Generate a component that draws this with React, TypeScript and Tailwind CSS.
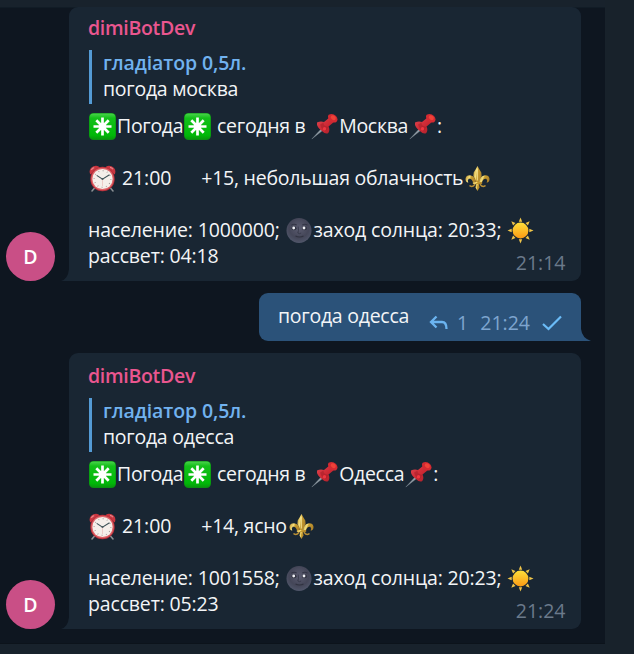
import type { ReactNode } from "react";

const glyph = "inline-block size-[27px] mx-px -my-1 align-[-3px]";

function Star() {
  return (
    <svg className={glyph} viewBox="0 0 27 27">
      <defs>
        <linearGradient id="starBg" x1="0" y1="0" x2="0" y2="1">
          <stop offset="0" stopColor="#4ad24c" />
          <stop offset="0.18" stopColor="#14c01a" />
          <stop offset="0.85" stopColor="#00b808" />
          <stop offset="1" stopColor="#079a0c" />
        </linearGradient>
      </defs>
      <rect width="27" height="27" rx="4.5" fill="#0a8f12" />
      <rect x="0.6" y="0.5" width="25.8" height="25.4" rx="4" fill="url(#starBg)" />
      <path d="M13.5 4.5V22.500M4.500 13.500H22.500M7.300 7.300L19.700 19.700M19.700 7.300L7.300 19.700" stroke="#fff" strokeWidth="2.7" />
      <circle cx="13.500" cy="13.500" r="3.400" fill="#fff" />
    </svg>
  );
}

function Pin() {
  return (
    <svg className={glyph} viewBox="0 0 27 27">
      <defs>
        <linearGradient id="pinRed" x1="0" y1="0" x2="1" y2="1">
          <stop offset="0" stopColor="#dc4650" />
          <stop offset="0.5" stopColor="#cf2a35" />
          <stop offset="1" stopColor="#a5202a" />
        </linearGradient>
      </defs>
      <path d="M12 14L0.800 26L13.500 16Z" fill="#97a1aa" stroke="#7f8a94" strokeWidth="0.400" />
      <path d="M6 9.500Q9.500 7.800 13 9L18.500 4.500L23 9L17.500 13.500Q19.300 17 17.300 20Q14.500 21.800 10.300 17.500Q5.300 13.500 6 9.500Z" fill="url(#pinRed)" />
      <path d="M12.500 9.500Q12 13 17.300 14L15.500 17.500Q10 17 9.200 11.500Z" fill="#a81f2a" opacity="0.6" />
      <path d="M17.600 1.800Q21.500-.5 25 3Q28 6.800 25 9.300Q21.500 10.300 18.500 7.200Q16 4 17.600 1.800Z" fill="#d42a32" />
      <ellipse cx="22.300" cy="4.700" rx="2.800" ry="2.100" transform="rotate(40 22.300 4.700)" fill="#ef4238" />
      <circle cx="13.500" cy="15.800" r="1.700" fill="#ee3640" />
    </svg>
  );
}

function Clock() {
  return (
    <svg className={glyph} viewBox="0 0 27 27">
      <path d="M6 22.500L3 26M21 22.500L24 26" stroke="#8d9296" strokeWidth="1.500" strokeLinecap="round" />
      <path d="M1.200 9.500Q-.8 3.500 4.500 1.200Q9-.2 11 3Z" fill="#c93640" />
      <path d="M25.800 9.500Q27.800 3.500 22.500 1.200Q18-.2 16 3Z" fill="#c93640" />
      <path d="M2.400 5Q3 3 5.200 2.600M21 2.400Q23 2.600 24 4.200" stroke="#e68589" strokeWidth="1.200" fill="none" />
      <circle cx="13.500" cy="14" r="12.200" fill="#b9303b" />
      <circle cx="13.500" cy="14" r="11.300" fill="#de6468" />
      <circle cx="13.500" cy="14" r="10.100" fill="#f5efea" />
      <circle cx="13.500" cy="14" r="8.300" fill="none" stroke="#9b918f" strokeWidth="1.300" strokeDasharray="0.700 3.646" />
      <path d="M7.700 10.400L13.500 14.200L20.500 9.800" fill="none" stroke="#3d5257" strokeWidth="1.100" />
      <path d="M13.500 14V21" stroke="#e0aaa7" strokeWidth="0.500" />
      <circle cx="13.500" cy="14" r="1" fill="#4e5d61" />
    </svg>
  );
}

function Lily() {
  return (
    <svg className={glyph} viewBox="0 0 27 27">
      <defs>
        <linearGradient id="gold" x1="0" y1="0" x2="1" y2="0.3">
          <stop offset="0" stopColor="#b4892a" />
          <stop offset="0.42" stopColor="#f6e07c" />
          <stop offset="0.56" stopColor="#c99f31" />
          <stop offset="1" stopColor="#b0842a" />
        </linearGradient>
      </defs>
      <g fill="url(#gold)">
        <path d="M13.500 1Q15 4 17.300 7.500Q18.300 10.500 16.300 13.500L14.900 17.500H12.100L10.700 13.500Q8.700 10.500 9.700 7.500Q12 4 13.500 1Z" />
        <path d="M12 18Q11.500 11 6.800 10.400Q2 10 1.500 13.700Q1.400 17 4.300 17.800Q3.100 15.500 4.700 13.800Q7.800 13 9.300 18Z" />
        <path d="M15 18Q15.500 11 20.200 10.400Q25 10 25.500 13.700Q25.600 17 22.700 17.800Q23.900 15.500 22.300 13.800Q19.200 13 17.700 18Z" />
        <rect x="8.700" y="17" width="9.600" height="2.100" rx="1" />
        <path d="M12.100 19H14.900L15.500 22.500L13.500 26L11.500 22.500Z" />
      </g>
      <path d="M10.800 19.500Q8.500 22.500 6 20.800M16.200 19.500Q18.500 22.500 21 20.800" fill="none" stroke="#b98f35" strokeWidth="1.500" strokeLinecap="round" />
      <path d="M13.300 3.500V15.500" stroke="#fff3ac" strokeWidth="0.800" />
    </svg>
  );
}

function Moon() {
  return (
    <svg className={glyph} viewBox="0 0 27 27">
      <defs>
        <radialGradient id="moonBg" cx="0.5" cy="0.4" r="0.6">
          <stop offset="0" stopColor="#5b5c70" />
          <stop offset="0.65" stopColor="#444658" />
          <stop offset="1" stopColor="#50566a" />
        </radialGradient>
      </defs>
      <circle cx="13" cy="13.500" r="12.500" fill="url(#moonBg)" />
      <path d="M5.300 8.200Q8 6.300 10.700 8M16.300 8Q19 6.300 21.500 8.200" fill="none" stroke="#343646" strokeWidth="1.100" />
      <ellipse cx="8" cy="11.200" rx="2.500" ry="2" fill="#303241" />
      <ellipse cx="18.500" cy="11.200" rx="2.500" ry="2" fill="#303241" />
      <circle cx="7.700" cy="11" r="1.400" fill="#f0f1f6" />
      <circle cx="18" cy="11" r="1.400" fill="#f0f1f6" />
      <path d="M12.200 9.500Q13 14 11.800 16Q13.500 17.300 15.200 16" fill="none" stroke="#37394a" strokeWidth="0.900" />
      <path d="M9.500 19Q13.500 21 17.500 19" fill="none" stroke="#30323f" strokeWidth="1.200" />
    </svg>
  );
}

function Sun() {
  return (
    <svg className={glyph} viewBox="0 0 27 27">
      <defs>
        <linearGradient id="sunBg" x1="0" y1="0" x2="0" y2="1">
          <stop offset="0" stopColor="#ffdf3a" />
          <stop offset="1" stopColor="#fb9a14" />
        </linearGradient>
      </defs>
      {[0, 45, 90, 135, 180, 225, 270, 315].map((angle) => (
        <path key={angle} d="M11.800 4.700L13.500 0.500L15.200 4.700Z" fill="#f1c64a" transform={`rotate(${angle} 13.500 13.500)`} />
      ))}
      <circle cx="13.500" cy="13.500" r="7.900" fill="url(#sunBg)" />
    </svg>
  );
}

function Avatar() {
  return (
    <div className="ml-1.5 flex size-[49px] shrink-0 items-center justify-center rounded-full bg-[#c94f86] text-[19.5px] font-semibold text-white">
      D
    </div>
  );
}

function BotMessage({ quote, time, children }: { quote: string; time: string; children: ReactNode }) {
  return (
    <div className="flex h-full items-end">
      <Avatar />
      <svg className="ml-[6px] h-3 w-2 shrink-0" viewBox="0 0 8 12">
        <path d="M8 0V12H0Q7 10 8 0Z" fill="#192633" />
      </svg>
      <div className="relative flex h-full w-[512px] flex-col justify-end rounded-[9px] rounded-bl-none bg-[#192633] px-[19px] pb-3">
        <div className="h-[26px] font-semibold tracking-[-0.3px] text-[#ea568f]">dimiBotDev</div>
        <div className="mt-[9px] ml-px h-[54px] border-l-3 border-[#549bd5] pl-[11px]">
          <div className="font-semibold tracking-[-0.1px] text-[#71b2ef]">гладіатор 0,5л.</div>
          <div className="tracking-[-0.26px]">{quote}</div>
        </div>
        <div className="mt-[9px]">{children}</div>
        <div className="absolute right-[15.5px] bottom-[5px] tracking-normal text-[#6b7a8b]">{time}</div>
      </div>
    </div>
  );
}

function Forecast({ city, weather, population, sunset, sunrise }: { city: string; weather: string; population: string; sunset: string; sunrise: string }) {
  return (
    <>
      <div className="h-[26px] tracking-[-0.3px] whitespace-pre"><Star />Погода<Star /> сегодня в <Pin />{city}<Pin />:</div>
      <div className="mt-[26px] h-[26px] tracking-[-0.24px] whitespace-pre"><Clock /><span className="tracking-[-0.08px]"> 21:00      </span>{weather}<Lily /></div>
      <div className="mt-[26px] h-[26px] tracking-[-0.16px] whitespace-pre">население: {population}; <Moon />заход солнца: {sunset}; <Sun /></div>
      <div className="h-[26px] tracking-[-0.16px]">рассвет: {sunrise}</div>
    </>
  );
}

export default function App() {
  return (
    <div className="flex h-[654px] w-[634px] overflow-hidden bg-[#0e1620] font-['Open_Sans','Noto_Sans',sans-serif] text-[19.5px] leading-[26px] text-[#f3f5f7]">
      <main className="flex w-[605px] shrink-0 flex-col">
        <header className="h-2 shrink-0 border-b border-[#111c26] bg-[#18222c]" />
        <section className="flex h-[635px] shrink-0 flex-col gap-3">
          <div className="-mt-px h-[274px]">
            <BotMessage quote="погода москва" time="21:14">
              <Forecast city="Москва" weather="+15, небольшая облачность" population="1000000" sunset="20:33" sunrise="04:18" />
            </BotMessage>
          </div>
          <div className="ml-[259px] flex h-12 items-end">
            <div className="flex h-12 w-[322px] rounded-[9px] rounded-br-none bg-[#2b5279] pr-[19px] pl-[19px]">
              <span className="mt-2.5 tracking-[-0.26px]">погода одесса</span>
              <div className="mt-[17px] ml-auto flex text-[#7ea5cf]">
                <svg className="mt-1 mr-2 h-[18px] w-5" viewBox="0 0 20 18" fill="none" stroke="#6bb4f0" strokeWidth="2.300">
                  <path d="M7.500 2.500L2 8L7.500 13.500M2 8H13Q17.500 8 17.500 15" />
                </svg>
                <span>1</span>
                <span className="ml-3">21:24</span>
                <svg className="mt-1 ml-3 h-[18px] w-5" viewBox="0 0 20 18" fill="none" stroke="#6bbcf7" strokeWidth="2.200">
                  <path d="M1 10L6.500 15L19 2.500" />
                </svg>
              </div>
            </div>
            <svg className="h-3 w-[10px] shrink-0" viewBox="0 0 10 12"><path d="M0 0V12H10Q1 9 0 0Z" fill="#2b5279" /></svg>
          </div>
          <div className="h-[276px]">
            <BotMessage quote="погода одесса" time="21:24">
              <Forecast city="Одесса" weather="+14, ясно" population="1001558" sunset="20:23" sunrise="05:23" />
            </BotMessage>
          </div>
        </section>
        <footer className="h-[11px] shrink-0 border-t border-[#0c131b] bg-[#18222c]" />
      </main>
      <aside className="flex-1 bg-[#18222b]" />
    </div>
  );
}
